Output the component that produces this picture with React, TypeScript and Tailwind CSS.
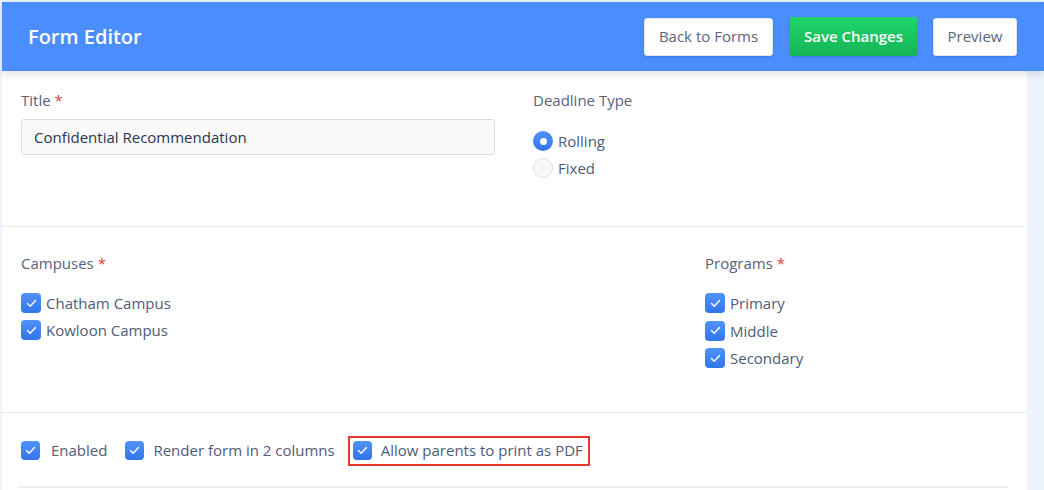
import React, { useState } from "react";

const font = { fontFamily: '"Open Sans", "Noto Sans", sans-serif' };

const Check = ({ size = 20 }: { size?: number }) => (
  <span
    className="flex shrink-0 items-center justify-center rounded-[4px] bg-gradient-to-b from-[#5193fa] to-[#3174ec]"
    style={{ width: size, height: size }}
  >
    <svg width="11" height="9" viewBox="0 0 11 9" fill="none">
      <path d="M1.5 4.6 L4.2 7.2 L9.5 1.6" stroke="white" strokeWidth="1.4" strokeLinecap="round" strokeLinejoin="round" />
    </svg>
  </span>
);

const Radio = ({ on }: { on: boolean }) =>
  on ? (
    <span className="flex h-[20px] w-[20px] shrink-0 items-center justify-center rounded-full bg-gradient-to-b from-[#5193fa] to-[#3174ec]">
      <span className="h-[7px] w-[7px] rounded-full bg-white" />
    </span>
  ) : (
    <span className="h-[20px] w-[20px] shrink-0 rounded-full border border-[#dedede] bg-[#f8f8f8]" />
  );

const Req = () => <span className="ml-1 text-[#e8403a]">*</span>;

export default function App() {
  const [deadline, setDeadline] = useState("Rolling");

  return (
    <div className="flex min-h-[490px] flex-col bg-[#edf3fc] pl-[2px] pt-[2px]" style={font}>
      {/* header */}
      <div className="relative z-10 flex h-[69px] items-center justify-between bg-[#4a8dfd] pl-[26px] pr-[27px] shadow-[0_3px_8px_rgba(0,0,0,0.12)]">
        <h1 className="text-[20px] font-semibold text-white">Form Editor</h1>
        <div className="flex items-center">
          <button className="h-[38px] w-[129px] rounded-[3px] border border-[#e4e7ec] bg-white text-[15px] text-[#59647d] shadow-sm">
            Back to Forms
          </button>
          <button className="ml-[17px] h-[39px] w-[127px] rounded-[3px] bg-gradient-to-b from-[#1fd66b] to-[#14b555] text-[15px] font-semibold text-white shadow-sm">
            Save Changes
          </button>
          <button className="ml-[16px] h-[38px] w-[84px] rounded-[3px] border border-[#e4e7ec] bg-white text-[15px] text-[#59647d] shadow-sm">
            Preview
          </button>
        </div>
      </div>

      <div className="mr-[17px] flex-1 bg-white text-[15px] text-[#4f5b78]">
        {/* title + deadline */}
        <div className="flex h-[156px] border-b border-[#e9ebee] px-[19px] pt-[18px]">
          <div className="w-[474px]">
            <div className="leading-[22px] text-[#56627e]">
              Title
              <Req />
            </div>
            <div className="mt-[8px] flex h-[36px] items-center rounded-[3px] border border-[#dcdcdc] bg-[#f9f9f9] px-[12px] text-[#2a3450]">
              Confidential Recommendation
            </div>
          </div>
          <div className="ml-[38px]">
            <div className="leading-[22px] text-[#56627e]">Deadline Type</div>
            <div className="mt-[20px] flex flex-col gap-[7px]">
              {["Rolling", "Fixed"].map((d) => (
                <label key={d} className="flex cursor-pointer items-center gap-[5px] leading-[20px]" onClick={() => setDeadline(d)}>
                  <Radio on={deadline === d} />
                  {d}
                </label>
              ))}
            </div>
          </div>
        </div>

        {/* campuses + programs */}
        <div className="flex h-[186px] border-b border-[#e9ebee] px-[19px] pt-[25px]">
          <div className="w-[684px]">
            <div className="leading-[22px] text-[#56627e]">
              Campuses
              <Req />
            </div>
            <div className="mt-[19px] flex flex-col gap-[7px]">
              {["Chatham Campus", "Kowloon Campus"].map((c) => (
                <div key={c} className="flex items-center gap-[5px] leading-[20px]">
                  <Check />
                  {c}
                </div>
              ))}
            </div>
          </div>
          <div>
            <div className="leading-[22px] text-[#56627e]">
              Programs
              <Req />
            </div>
            <div className="mt-[19px] flex flex-col gap-[7.5px]">
              {["Primary", "Middle", "Secondary"].map((p) => (
                <div key={p} className="flex items-center gap-[5px] leading-[20px]">
                  <Check />
                  {p}
                </div>
              ))}
            </div>
          </div>
        </div>

        {/* options */}
        <div className="pl-[16px] pr-[19px]">
          <div className="flex h-[75px] items-center border-b-2 border-[#eceef1] pl-[3px] pt-[2px]">
            <div className="flex items-center gap-[11px]">
              <Check size={19} />
              Enabled
            </div>
            <div className="ml-[18px] flex items-center gap-[9px]">
              <Check size={19} />
              Render form in 2 columns
            </div>
            <div className="ml-[13px] flex h-[30px] items-center gap-[9px] border-2 border-[#e8362f] pl-[3px] pr-[5px]">
              <Check size={19} />
              Allow parents to print as PDF
            </div>
          </div>
        </div>
      </div>
    </div>
  );
}
